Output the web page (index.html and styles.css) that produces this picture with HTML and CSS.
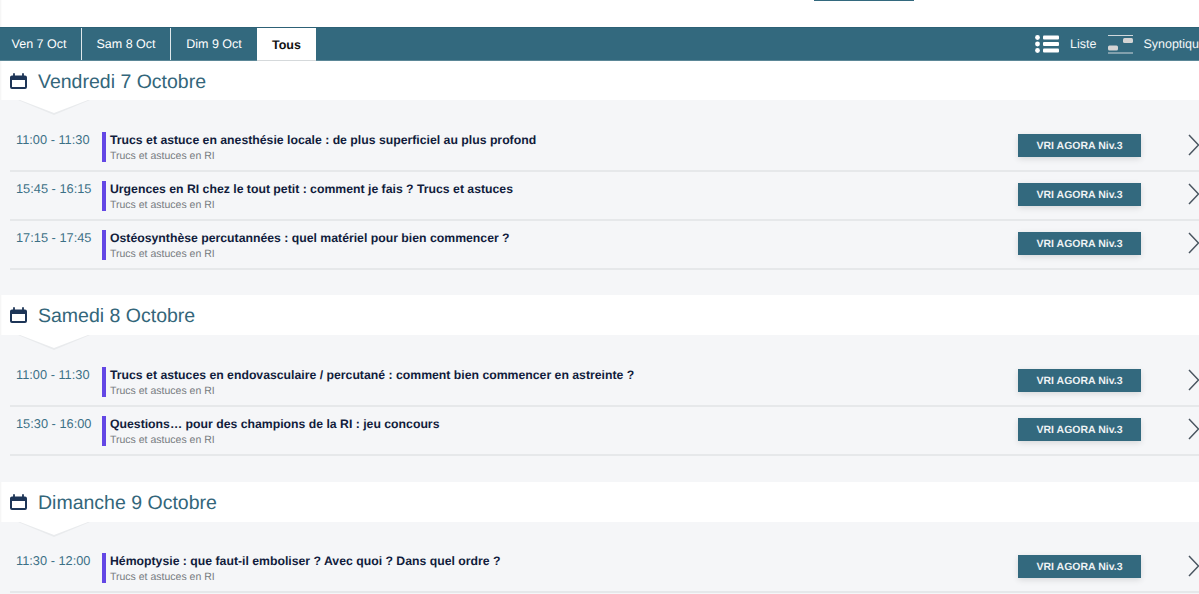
FILE: index.html
```html
<!DOCTYPE html>
<html lang="fr">
<head>
<meta charset="utf-8">
<title>Programme</title>
<link rel="stylesheet" href="styles.css">
</head>
<body>
<svg class="defs" width="0" height="0" aria-hidden="true">
  <symbol id="cal" viewBox="0 0 17 16">
    <path d="M1 4.500a1 1 0 0 1 1-1h13a1 1 0 0 1 1 1v9.500a1 1 0 0 1-1 1H2a1 1 0 0 1-1-1z" fill="none" stroke="#1d3557" stroke-width="2"/>
    <path d="M1 3.500h15v3.500H1z" fill="#1d3557"/>
    <path d="M4 1v3M13 1v3" stroke="#1d3557" stroke-width="1.800" stroke-linecap="round"/>
  </symbol>
  <symbol id="chev" viewBox="0 0 11 22">
    <path d="M1 1 10.500 11 1 21" fill="none" stroke="#4a5560" stroke-width="1.500"/>
  </symbol>
</svg>
<div class="topbar"><span class="topline"></span></div>
<nav class="nav">
  <div class="tabs">
    <a class="tab tab-1">Ven 7 Oct</a>
    <a class="tab tab-2">Sam 8 Oct</a>
    <a class="tab tab-3">Dim 9 Oct</a>
    <a class="tab active">Tous</a>
  </div>
  <div class="views">
    <svg class="ico-list" width="24" height="18" viewBox="0 0 24 18">
      <g fill="#fff">
        <circle cx="2.500" cy="2.500" r="2.400"/><circle cx="2.500" cy="9" r="2.400"/><circle cx="2.500" cy="15.500" r="2.400"/>
        <rect x="8" y="0.500" width="16" height="4" rx="1"/><rect x="8" y="7" width="16" height="4" rx="1"/><rect x="8" y="13.500" width="16" height="4" rx="1"/>
      </g>
    </svg>
    <span class="view-label liste">Liste</span>
    <svg class="ico-syn" width="25" height="19" viewBox="0 0 25 19">
      <rect x="0" y="0" width="25" height="1" fill="#cfd8dc"/>
      <rect x="15" y="3" width="10" height="5" rx="1.500" fill="#d4d4d4"/>
      <rect x="0" y="10.500" width="10" height="5" rx="1.500" fill="#d4d4d4"/>
      <rect x="0" y="17.500" width="25" height="1" fill="#cfd8dc"/>
    </svg>
    <span class="view-label">Synoptique</span>
  </div>
</nav>

<section class="s1">
  <h2 class="day"><svg class="cal" width="17" height="16"><use href="#cal"/></svg>Vendredi 7 Octobre</h2>
  <div class="panel">
    <div class="row"><span class="time">11:00 - 11:30</span><div class="info"><div class="title">Trucs et astuce en anesthésie locale : de plus superficiel au plus profond</div><div class="sub">Trucs et astuces en RI</div></div><span class="badge">VRI AGORA Niv.3</span><svg class="chev" width="11" height="22"><use href="#chev"/></svg></div>
    <div class="row"><span class="time">15:45 - 16:15</span><div class="info"><div class="title">Urgences en RI chez le tout petit : comment je fais ? Trucs et astuces</div><div class="sub">Trucs et astuces en RI</div></div><span class="badge">VRI AGORA Niv.3</span><svg class="chev" width="11" height="22"><use href="#chev"/></svg></div>
    <div class="row"><span class="time">17:15 - 17:45</span><div class="info"><div class="title">Ostéosynthèse percutannées : quel matériel pour bien commencer ?</div><div class="sub">Trucs et astuces en RI</div></div><span class="badge">VRI AGORA Niv.3</span><svg class="chev" width="11" height="22"><use href="#chev"/></svg></div>
  </div>
</section>

<section class="s2">
  <h2 class="day"><svg class="cal" width="17" height="16"><use href="#cal"/></svg>Samedi 8 Octobre</h2>
  <div class="panel">
    <div class="row"><span class="time">11:00 - 11:30</span><div class="info"><div class="title">Trucs et astuces en endovasculaire / percutané : comment bien commencer en astreinte ?</div><div class="sub">Trucs et astuces en RI</div></div><span class="badge">VRI AGORA Niv.3</span><svg class="chev" width="11" height="22"><use href="#chev"/></svg></div>
    <div class="row"><span class="time">15:30 - 16:00</span><div class="info"><div class="title">Questions… pour des champions de la RI : jeu concours</div><div class="sub">Trucs et astuces en RI</div></div><span class="badge">VRI AGORA Niv.3</span><svg class="chev" width="11" height="22"><use href="#chev"/></svg></div>
  </div>
</section>

<section class="s3">
  <h2 class="day"><svg class="cal" width="17" height="16"><use href="#cal"/></svg>Dimanche 9 Octobre</h2>
  <div class="panel">
    <div class="row"><span class="time">11:30 - 12:00</span><div class="info"><div class="title">Hémoptysie : que faut-il emboliser ? Avec quoi ? Dans quel ordre ?</div><div class="sub">Trucs et astuces en RI</div></div><span class="badge">VRI AGORA Niv.3</span><svg class="chev" width="11" height="22"><use href="#chev"/></svg></div>
  </div>
</section>
</body>
</html>
```
FILE: styles.css
```css
* { box-sizing: border-box; }
html, body { margin: 0; padding: 0; }
body {
  width: 1199px;
  height: 594px;
  overflow: hidden;
  background: #fff;
  font-family: "Liberation Sans", Arial, sans-serif;
  text-rendering: geometricPrecision;
  box-shadow: inset 3px 0 2px -2px rgba(0,0,0,.05);
}
.defs { display: block; height: 0; }
.topbar { height: 27px; padding-left: 814px; }
.topline { display: block; width: 100px; height: 1px; background: #33697e; }
.nav {
  height: 34px;
  background: #33697e;
  border-top: 1px solid #2d6176;
  border-bottom: 1px solid #5b8797;
  display: flex;
  justify-content: space-between;
  color: #fff;
  font-size: 12.500px;
}
.tabs { display: flex; height: 33px; }
.tab {
  display: flex;
  align-items: center;
  justify-content: center;
  height: 32px;
  border-right: 1px solid #dfe8eb;
}
.tab-1 { width: 82px; padding-right: 3px; }
.tab-2 { width: 89px; }
.tab-3 { width: 86px; border-right: 0; }
.active {
  width: 59px;
  height: 33px;
  background: #fff;
  color: #111;
  font-weight: 700;
  font-size: 12.500px;
  border-right: 0;
  border-bottom: 1px solid #d5d9db;
  padding-top: 2px;
}
.views { display: flex; align-items: center; width: 164px; flex: none; white-space: nowrap; overflow: hidden; }
.views > * { flex: none; }
.ico-list { margin-right: 11px; }
.liste { margin-right: 12px; }
.ico-syn { margin-right: 10px; }
.view-label { color: #f4f7f8; }
.day {
  height: 40px;
  margin: 0;
  padding: 2px 0 0 10px;
  display: flex;
  align-items: center;
  color: #33667a;
  font-size: 19.500px;
  font-weight: 400;
}
.s1 .day { height: 39px; padding-top: 3px; }
.cal { margin-right: 11px; flex: none; position: relative; top: -1px; }
.panel {
  position: relative;
  background: #f5f6f8;
  padding: 23px 0 26px 10px;
}
.s1 .panel { padding-bottom: 25px; }
.s3 .panel { padding-top: 22px; }
.panel::before {
  content: "";
  position: absolute;
  left: 18px;
  top: 0;
  width: 72px;
  height: 15px;
  background: #e9ebed;
  clip-path: polygon(0 0, 100% 0, 50% 100%);
}
.panel::after {
  content: "";
  position: absolute;
  left: 20px;
  top: 0;
  width: 68px;
  height: 13px;
  background: #fff;
  clip-path: polygon(0 0, 100% 0, 50% 100%);
}
.row {
  height: 49px;
  display: flex;
  align-items: flex-start;
  border-bottom: 2px solid #e6e8ea;
  padding-top: 9px;
}
.time {
  width: 92px;
  flex: none;
  padding-left: 6px;
  font-size: 12.800px;
  line-height: 16px;
  color: #3c7086;
}
.info {
  width: 916px;
  flex: none;
  height: 30px;
  border-left: 4px solid #6347e5;
  padding-left: 4px;
}
.title {
  font-size: 12.250px;
  font-weight: 700;
  line-height: 16px;
  color: #111c3c;
}
.sub {
  font-size: 10.500px;
  line-height: 14px;
  margin-top: 1px;
  color: #767b80;
}
.badge {
  width: 123px;
  height: 23px;
  flex: none;
  margin-top: 2px;
  background: #33697e;
  color: #eef2f4;
  font-size: 10.500px;
  font-weight: 700;
  display: flex;
  align-items: center;
  justify-content: center;
  box-shadow: 0 2px 6px rgba(0,0,0,.12);
}
.chev { flex: none; margin-left: 47px; margin-top: 2px; }
```
